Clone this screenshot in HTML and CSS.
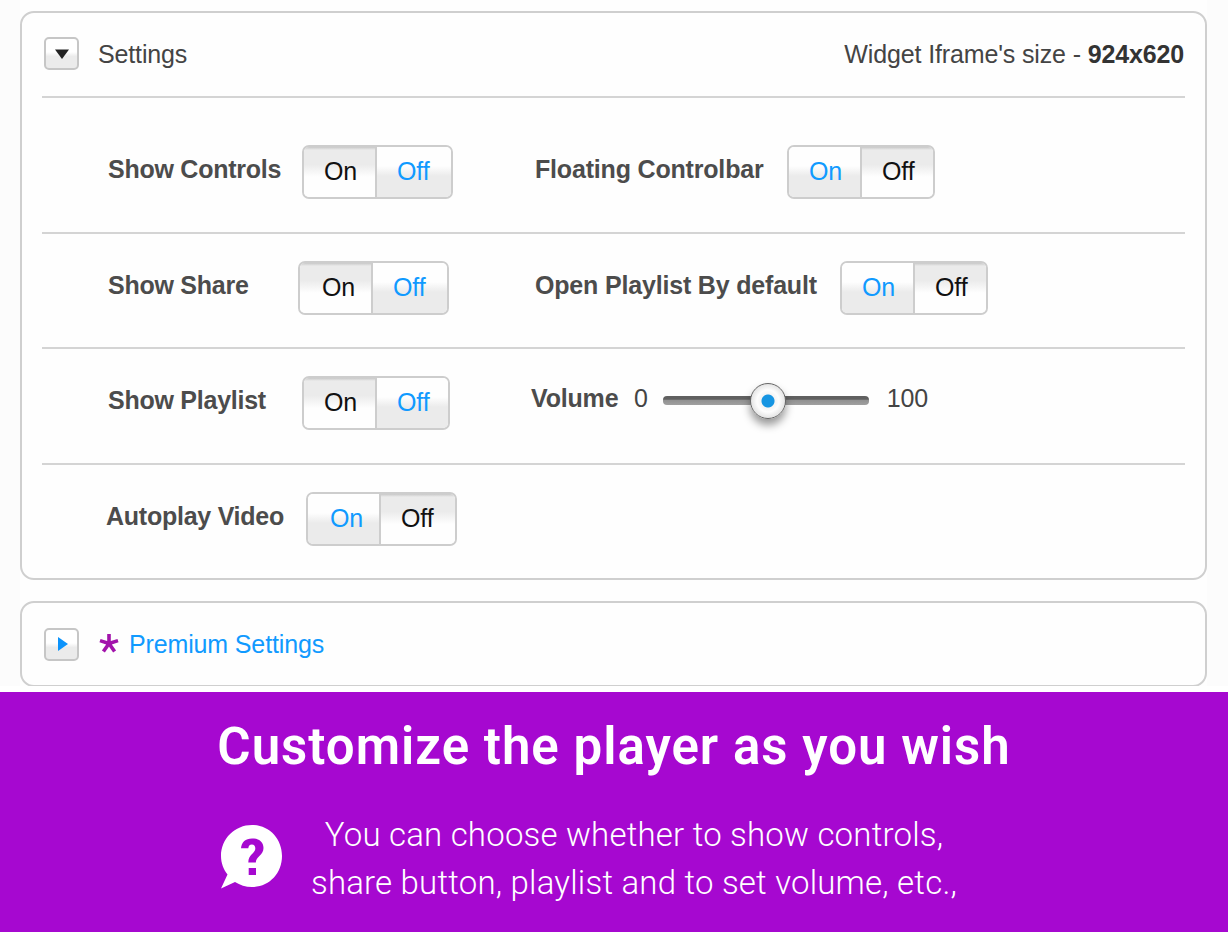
FILE: index.html
```html
<!doctype html>
<html>
	<head>
		<title>Customize the player</title>
		<meta charset="utf-8" />
		<meta name="viewport" content="width=device-width, initial-scale=1" />
		<link rel="stylesheet" href="styles.css">
	</head>
	
	<body>
		
		<div id="settings">
			<div class="panel">
				<div class="head">
					<div class="arrow"><svg width="16" height="12" viewBox="0 0 16 12"><path d="M1 1.500h14L8 11z" fill="#222"/></svg></div>
					<span class="title">Settings</span>
					<span class="size">Widget Iframe's size - <b>924x620</b></span>
				</div>
				
				<div class="row first">
					<div class="cell left">
						<label>Show Controls</label>
						<div class="toggle wide"><span class="active">On</span><span>Off</span></div>
					</div>
					<div class="cell">
						<label>Floating Controlbar</label>
						<div class="toggle"><span>On</span><span class="active">Off</span></div>
					</div>
				</div>
				
				<div class="row">
					<div class="cell left share">
						<label>Show Share</label>
						<div class="toggle wide"><span class="active">On</span><span>Off</span></div>
					</div>
					<div class="cell playlist">
						<label>Open Playlist By default</label>
						<div class="toggle"><span>On</span><span class="active">Off</span></div>
					</div>
				</div>
				
				<div class="row">
					<div class="cell left list">
						<label>Show Playlist</label>
						<div class="toggle"><span class="active">On</span><span>Off</span></div>
					</div>
					<div class="cell volume">
						<label>Volume</label>
						<span class="num">0</span>
						<div class="slider"><div class="knob"></div></div>
						<span class="num">100</span>
					</div>
				</div>
				
				<div class="row last">
					<div class="cell left autoplay">
						<label>Autoplay Video</label>
						<div class="toggle wide"><span>On</span><span class="active">Off</span></div>
					</div>
				</div>
			</div>
			
			<div class="panel premium">
				<div class="head">
					<div class="arrow"><svg width="12" height="16" viewBox="0 0 12 16"><path d="M1 1v14l10-7z" fill="#0c93fb"/></svg></div>
					<svg class="star" width="20" height="20" viewBox="0 0 20 20"><path d="M10 10.500V1M10 10.500L1 7.600M10 10.500L19 7.600M10 10.500L4.400 18.500M10 10.500L15.600 18.500" stroke="#a213ab" stroke-width="3.6" fill="none"/></svg>
					<span class="link">Premium Settings</span>
				</div>
			</div>
		</div>
		
		<div id="banner">
			<h1>Customize the player as you wish</h1>
			<div class="info">
				<svg class="bubble" width="62" height="64" viewBox="0 0 62 64">
					<path d="M31 0C48 0 61 13.500 61 31S48 62 31 62C24.500 62 19 60 14 57L0 63.500L6.500 49.500C2.500 44.500 0 38 0 31C0 13.500 14 0 31 0z" fill="#fff"/>
					<path d="M20 23.300C20.500 17 24.500 13.400 31 13.400C38 13.400 42.500 17 42.500 23C42.500 30.500 34.800 31.500 34.800 37.500H27.300C27.300 29 34.300 28.500 34.300 23.500C34.300 21 33 19.500 30.900 19.500C28.500 19.500 27.500 21 27.300 23.300zM27.700 43h7.300v7h-7.300z" fill="#a608d0"/>
				</svg>
				<p>You can choose whether to show controls,<br>share button, playlist and to set volume, etc.,</p>
			</div>
		</div>
		
	</body>
</html>
```
FILE: styles.css
```css
* {
	box-sizing: border-box;
}

body {
	margin: 0;
	background-color: white;
	font-family: "Liberation Sans", Arial, sans-serif;
	font-size: 25px;
	letter-spacing: -0.14px;
	line-height: 30px;
	color: #444;
}

#settings {
	height: 686px;
	padding: 11px 21px 0 20px;
	background: linear-gradient(to right, #fcfcfc 20px, #fefefe 20px, #fefefe 1207px, #fcfcfc 1207px);
	overflow: hidden;
}

.panel {
	height: 569px;
	border: 2px solid #cfcfcf;
	border-radius: 14px;
	padding: 0 20px;
	background-color: #fefefe;
}

.premium {
	height: 86px;
	margin-top: 21px;
}

.head {
	display: flex;
	align-items: center;
	height: 85px;
	padding: 0 1px 2px 2px;
	border-bottom: 2px solid #d4d4d4;
	color: #444;
}

.premium .head {
	height: 82px;
	border: 0;
	padding-bottom: 0;
}

.arrow {
	display: flex;
	align-items: center;
	justify-content: center;
	width: 35px;
	height: 33px;
	border: 2px solid #c6c6c6;
	border-radius: 5px;
	background: linear-gradient(#fff 45%, #ebebeb 60%, #ebebeb);
}

.premium .arrow {
	padding-left: 3px;
}

.title {
	margin-left: 19px;
}

.size {
	margin-left: auto;
}

.size b {
	color: #333;
}

.star {
	margin: -3px 0 0 20px;
}

.link {
	margin-left: 10px;
	color: #109aff;
}

.row {
	display: flex;
	height: 115.3px;
	padding: 27px 0 0 66px;
	border-bottom: 2px solid #d4d4d4;
}

.first {
	height: 136px;
	padding-top: 47px;
}

.last {
	border: 0;
}

.cell {
	display: flex;
	align-items: flex-start;
}

.left {
	width: 427px;
}

label {
	width: 252px;
	margin-top: 9px;
	font-weight: bold;
	letter-spacing: -0.18px;
	color: #4c4c4c;
}

.left label {
	width: 194px;
	letter-spacing: -0.25px;
}

.playlist label {
	width: 305px;
}

.left.share label {
	width: 190px;
}

.autoplay {
	margin-left: -2px;
}

.left.autoplay label {
	width: 200px;
}

.toggle {
	display: flex;
	width: 148px;
	height: 54px;
	border: 2px solid #cdcdcd;
	border-radius: 7px;
	overflow: hidden;
}

.wide {
	width: 151px;
}

.toggle span {
	flex: 1;
	padding: 9px 0 0 20px;
	color: #109aff;
	background: linear-gradient(#fefefe 38%, #ebebeb 58%, #ebebeb);
}

.toggle span:first-child {
	flex: none;
	width: 73px;
	border-right: 2px solid #cdcdcd;
}

.share .toggle span:first-child,
.autoplay .toggle span:first-child {
	padding-left: 22px;
}

.toggle .active {
	color: #111;
	background: linear-gradient(#c8c8c8, #ebebeb 3px, #ebebeb 35%, #fefefe 60%);
}

.volume {
	margin-left: -4px;
}

.volume label {
	width: 103px;
	margin-top: 7px;
}

.num {
	margin-top: 7px;
}

/* track with the round handle on top of it */
.slider {
	position: relative;
	width: 206px;
	height: 9px;
	margin: 20px 18px 0 15px;
	border-radius: 4px;
	background: linear-gradient(#606060 35%, #929292 50%, #a0a0a0);
}

.knob {
	position: absolute;
	left: 87px;
	top: -13px;
	width: 36px;
	height: 36px;
	border: 1.5px solid #666;
	border-radius: 50%;
	background: radial-gradient(circle, #1695e2 6px, #f4f4f4 7px, #fdfdfd 11px, #e4e4e4 17px);
	box-shadow: 0 6px 8px rgba(0, 0, 0, 0.4);
}

#banner {
	height: 240px;
	margin-top: 6px;
	padding-top: 25px;
	background-color: #a608d0;
	color: white;
	font-family: Roboto, sans-serif;
}

h1 {
	margin: 0;
	font-size: 51px;
	line-height: 59px;
	font-weight: 600;
	letter-spacing: 1px;
	text-align: center;
}

.info {
	display: flex;
	padding: 35px 0 0 221px;
}

.bubble {
	margin-top: 14px;
}

p {
	width: 702px;
	margin: 0;
	font-size: 33px;
	font-weight: 300;
	letter-spacing: 0.2px;
	line-height: 48px;
	text-align: center;
	white-space: nowrap;
}
```
